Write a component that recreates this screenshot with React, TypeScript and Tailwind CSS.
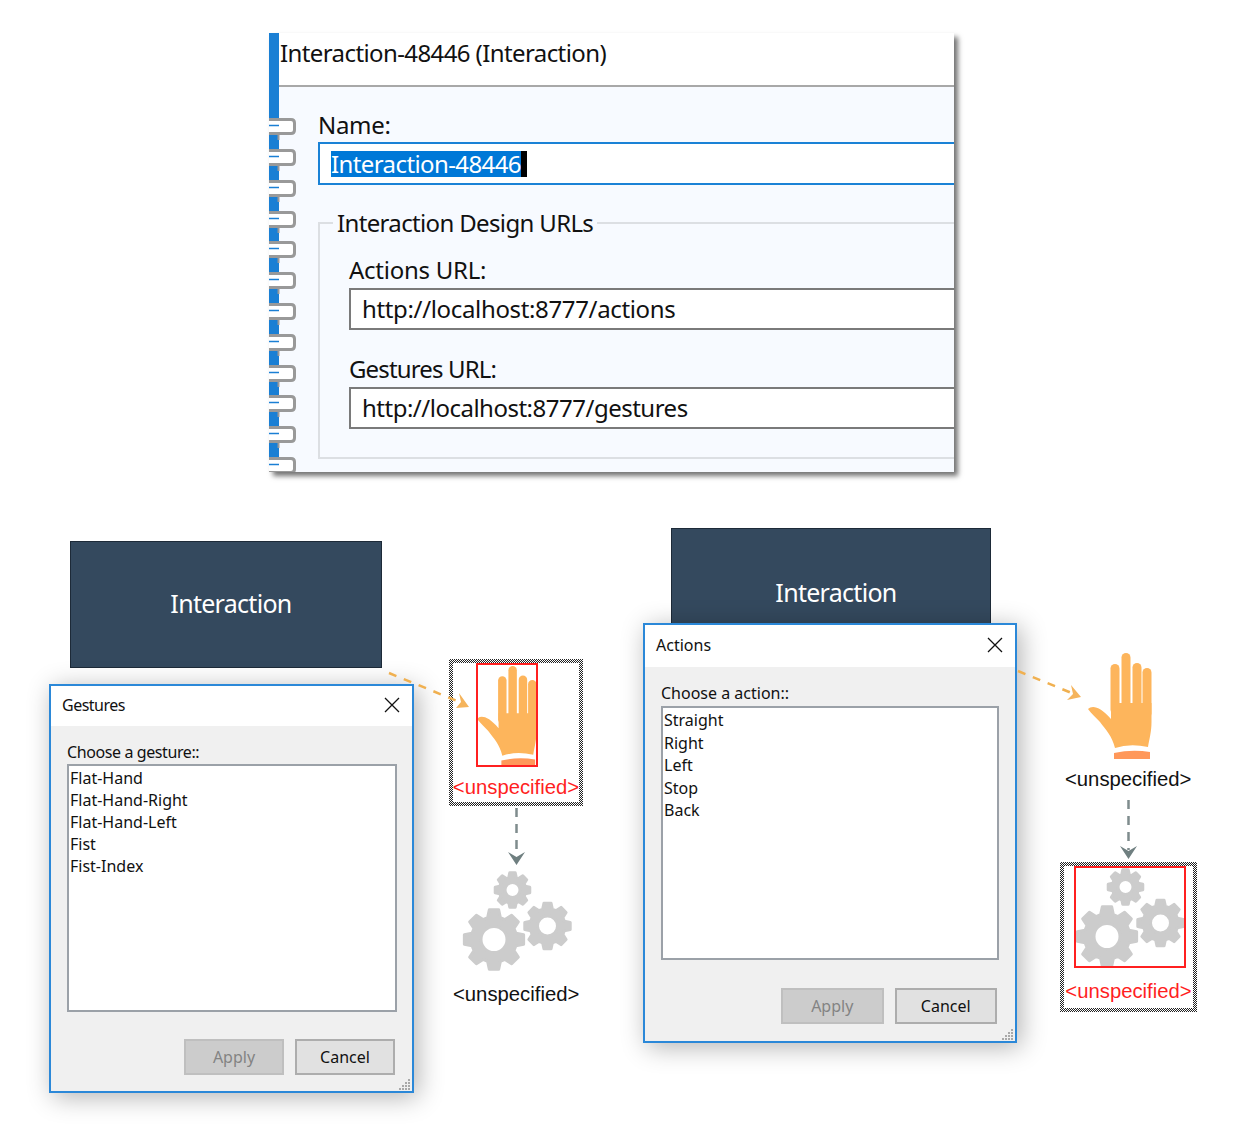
import React from 'react';

const RING_TOPS = [117, 148, 179, 210, 240, 271, 302, 333, 364, 394, 425, 456];

// Binder rings down the left edge of the notebook
const BinderRing = () => (
  <svg width="28" height="24" viewBox="0 0 28 24" className="block">
    <path d="M0 2.500H22Q25.500 2.500 25.500 6V13Q25.500 16.500 22 16.500H0" fill="#fff" stroke="#999999" strokeWidth="3" />
    <path d="M0 8.500H10" stroke="#1a7fd4" strokeWidth="1.500" />
    <path d="M9.500 17V23" stroke="#999999" strokeWidth="2" />
  </svg>
);

const TextBox = ({ value, trackingClass }: { value: string; trackingClass: string }) => (
  <div className={`flex h-[42px] items-center border-2 border-r-0 border-[#7a7a7a] bg-white pl-[11px] text-[24px] text-[#111] ${trackingClass}`}>
    {value}
  </div>
);

const Notebook = () => (
  <div className="absolute left-[269px] top-[33px] flex h-[439px] w-[685px] overflow-hidden bg-white shadow-[4px_4px_5px_rgba(0,0,0,0.55)]">
    <div className="w-[10px] shrink-0 bg-[#1a7fd4]" />
    <div className="absolute left-0 top-0">
      {RING_TOPS.map((top) => (
        <div key={top} className="absolute left-0" style={{ top: top - 33 }}>
          <BinderRing />
        </div>
      ))}
    </div>
    <div className="flex min-w-0 flex-1 flex-col">
      <div className="flex h-[52px] shrink-0 items-start pl-px pt-[3px] text-[24px] leading-[34px] tracking-[-0.6px] text-[#111]">
        Interaction-48446 (Interaction)
      </div>
      <div className="flex-1 border-t-2 border-[#a8a8a8] bg-[#f7faff] pl-[39px] pt-[24px]">
        <div className="mb-[3px] h-[28px] text-[24px] leading-[28px] tracking-[-0.3px] text-[#111]">Name:</div>
        <div className="flex h-[43px] items-center border-2 border-r-0 border-[#1a82d6] bg-white pl-[11px] text-[24px] tracking-[-0.6px]">
          <span className="bg-[#0078d7] leading-[26px] text-white">Interaction-48446</span>
          <span className="h-[26px] w-[6px] bg-black" />
        </div>
        <fieldset className="mt-[23px] border-2 border-r-0 border-[#dcdfe3] pb-[28px] pl-[29px]">
          <legend className="ml-[-16px] px-[4px] pt-px text-[24px] leading-[28px] tracking-[-0.65px] text-[#111]">Interaction Design URLs</legend>
          <div className="mb-[4px] mt-[19px] h-[28px] text-[24px] leading-[28px] tracking-[-0.25px] text-[#111]">Actions URL:</div>
          <TextBox value="http://localhost:8777/actions" trackingClass="tracking-[-0.35px]" />
          <div className="mb-[4px] mt-[25px] h-[28px] text-[24px] leading-[28px] tracking-[-0.85px] text-[#111]">Gestures URL:</div>
          <TextBox value="http://localhost:8777/gestures" trackingClass="tracking-[-0.5px]" />
        </fieldset>
      </div>
    </div>
  </div>
);

const Grip = () => (
  <svg width="12" height="12" viewBox="0 0 12 12" className="absolute bottom-[1px] right-[1px]">
    {[[9, 1], [6, 4], [9, 4], [3, 7], [6, 7], [9, 7], [0, 10], [3, 10], [6, 10], [9, 10]].map(([x, y]) => (
      <rect key={`${x}-${y}`} x={x} y={y} width="2" height="2" fill="#a9a9a9" />
    ))}
  </svg>
);

type DialogProps = {
  title: string;
  prompt: string;
  items: string[];
  rowClass: string;
  frameClass: string;
  titleClass: string;
  promptClass: string;
  listClass: string;
  buttonClass: string;
};

const Dialog = ({ title, prompt, items, rowClass, frameClass, titleClass, promptClass, listClass, buttonClass }: DialogProps) => (
  <div className={`absolute flex flex-col border-2 border-[#2b88d8] bg-white shadow-[4px_4px_24px_rgba(0,0,0,0.3)] ${frameClass}`}>
    <div className={`flex shrink-0 items-center justify-between pb-[2px] pl-[11px] pr-[12px] text-[16px] text-[#111] ${titleClass}`}>
      <span>{title}</span>
      <svg width="16" height="16" viewBox="0 0 16 16">
        <path d="M1 1L15 15M15 1L1 15" stroke="#111" strokeWidth="1.300" fill="none" />
      </svg>
    </div>
    <div className="relative flex flex-1 flex-col bg-[#f0f0f0] px-[16px] pt-[15px] text-[16px] text-[#111]">
      <div className={`h-[22px] leading-[22px] ${promptClass}`}>{prompt}</div>
      <div className={`border-2 border-[#9ba1a8] bg-white pl-[1px] pt-[1px] ${listClass}`}>
        {items.map((item) => (
          <div key={item} className={rowClass}>{item}</div>
        ))}
      </div>
      <div className={`flex justify-end gap-[11px] ${buttonClass}`}>
        <div className="flex h-[36px] flex-1 items-center justify-center border-2 border-[#bfbfbf] bg-[#cccccc] text-[#838383]">Apply</div>
        <div className="flex h-[36px] flex-1 items-center justify-center border-2 border-[#adadad] bg-[#e1e1e1]">Cancel</div>
      </div>
      <Grip />
    </div>
  </div>
);

const Hand = ({ width, height }: { width: number; height: number }) => (
  <svg width={width} height={height} viewBox="0 0 64 108" preserveAspectRatio="none" className="block">
    <g fill="#fdb55c">
      <rect x="22.500" y="12" width="9" height="50" rx="4.500" />
      <rect x="33.500" y="1" width="9" height="60" rx="4.500" />
      <rect x="44.500" y="11" width="9" height="50" rx="4.500" />
      <rect x="54.500" y="16" width="9" height="50" rx="4.500" />
      <path d="M0 57C4 53 12 54 23 67V51H63.500V70C63.500 80 61 88 60 95Q42 91 27 96C24 84 18 78 12 70C8 66 3 61 0 57Z" />
    </g>
    <path d="M26 101Q44 97 62 100V107H26Z" fill="#ff985a" />
  </svg>
);

function gearPath(cx: number, cy: number, r: number, hole: number, teeth = 8) {
  const root = r * 0.76;
  const step = (Math.PI * 2) / teeth;
  let d = '';
  for (let i = 0; i < teeth; i++) {
    const a = i * step - Math.PI / 2;
    const pts: [number, number][] = [
      [root, a - step * 0.36],
      [r, a - step * 0.2],
      [r, a + step * 0.2],
      [root, a + step * 0.36],
    ];
    pts.forEach(([rad, ang], j) => {
      d += `${i === 0 && j === 0 ? 'M' : 'L'}${(cx + rad * Math.cos(ang)).toFixed(2)} ${(cy + rad * Math.sin(ang)).toFixed(2)}`;
    });
  }
  d += `Z M${cx - hole} ${cy}a${hole} ${hole} 0 1 0 ${hole * 2} 0a${hole} ${hole} 0 1 0 ${-hole * 2} 0Z`;
  return d;
}

const Gears = () => (
  <svg width="112" height="104" viewBox="0 0 112 104" className="block">
    <g fill="#cccccc" stroke="#cccccc" strokeWidth="3" strokeLinejoin="round" fillRule="evenodd">
      <path d={gearPath(50.500, 20, 17.500, 7.500)} />
      <path d={gearPath(85.500, 56, 23, 10)} />
      <path d={gearPath(32, 69.500, 30, 13)} />
    </g>
  </svg>
);

// Dithered selection outline around a shape
const Selection = ({ className, children }: { className: string; children: React.ReactNode }) => (
  <div className={`absolute bg-[repeating-conic-gradient(#222_0_25%,#fff_0_50%)] bg-[length:2px_2px] p-[4px] ${className}`}>
    <div className="relative flex h-full w-full flex-col items-center bg-white">{children}</div>
  </div>
);

const Unspecified = ({ className, red }: { className: string; red?: boolean }) => (
  <div className={`font-['Liberation_Sans',sans-serif] text-[20.300px] leading-[24px] ${red ? 'text-[#ff1f1f]' : 'text-[#111]'} ${className}`}>
    &lt;unspecified&gt;
  </div>
);

const Block = ({ frameClass, textClass }: { frameClass: string; textClass: string }) => (
  <div className={`absolute flex justify-center border border-[#1d2a38] bg-[#34495e] text-[25px] tracking-[-0.7px] text-white ${frameClass}`}>
    <span className={textClass}>Interaction</span>
  </div>
);

const Connectors = () => (
  <svg width="1239" height="1136" viewBox="0 0 1239 1136" className="pointer-events-none absolute left-0 top-0">
    <g fill="none" stroke="#f0b050" strokeWidth="2.500">
      <path d="M389 673L462 703" strokeDasharray="8 8" />
      <path d="M1018 671L1074 694" strokeDasharray="8 8" />
    </g>
    <path d="M469 707L456 708L461 702L459 693Z" fill="#f5b45c" />
    <path d="M1081 697L1067 700L1073 694L1071 685Z" fill="#f5b45c" />
    <g stroke="#7f8c8d" strokeWidth="2.500" fill="none">
      <path d="M516.500 808V856" strokeDasharray="9 7" />
      <path d="M1128.500 800V850" strokeDasharray="9 7" />
    </g>
    <path d="M508 852L516.500 857L525 852L516.500 865Z" fill="#6f7f80" />
    <path d="M1120 846L1128.500 851L1137 846L1128.500 859Z" fill="#6f7f80" />
  </svg>
);

export default function App() {
  return (
    <div className="relative h-[1136px] w-[1239px] overflow-hidden bg-white font-['Noto_Sans',sans-serif]">
      <Notebook />

      <Block frameClass="left-[70px] top-[541px] h-[127px] w-[312px] pl-[10px] pt-[44px]" textClass="leading-[34px]" />
      <Block frameClass="left-[671px] top-[528px] h-[110px] w-[320px] pl-[10px] pt-[46px]" textClass="leading-[34px]" />

      <Dialog
        title="Gestures"
        prompt="Choose a gesture::"
        items={['Flat-Hand', 'Flat-Hand-Right', 'Flat-Hand-Left', 'Fist', 'Fist-Index']}
        rowClass="h-[22px] leading-[22px]"
        frameClass="left-[49px] top-[684px] h-[409px] w-[365px]"
        titleClass="h-[40px] tracking-[-0.5px]"
        promptClass="mb-px tracking-[-0.4px]"
        listClass="h-[248px] w-[330px]"
        buttonClass="mt-[27px] w-[211px] self-end mr-[1px]"
      />
      <Dialog
        title="Actions"
        prompt="Choose a action::"
        items={['Straight', 'Right', 'Left', 'Stop', 'Back']}
        rowClass="h-[22.500px] leading-[22.500px]"
        frameClass="left-[643px] top-[623px] h-[420px] w-[374px]"
        titleClass="h-[42px]"
        promptClass="mb-[2px]"
        listClass="h-[254px] w-[338px]"
        buttonClass="mt-[28px] w-[216px] self-end mr-[2px]"
      />

      <Selection className="left-[449px] top-[659px] h-[147px] w-[134px]">
        <div className="ml-[-18px] h-[104px] w-[62px] overflow-hidden border-2 border-[#ff2020]">
          <div className="ml-[-1px]">
            <Hand width={60} height={102} />
          </div>
        </div>
        <Unspecified red className="mt-[8px]" />
      </Selection>

      <div className="absolute left-[462px] top-[870px]">
        <Gears />
      </div>
      <Unspecified className="absolute left-[453px] top-[982px]" />

      <div className="absolute left-[1088px] top-[652px]">
        <Hand width={64} height={108} />
      </div>
      <Unspecified className="absolute left-[1065px] top-[767px]" />

      <Selection className="left-[1060px] top-[862px] h-[150px] w-[137px]">
        <div className="ml-[2px] h-[102px] w-[112px] overflow-hidden border-2 border-[#ff2020]">
          <div className="ml-[-1px] mt-[-1px]">
            <Gears />
          </div>
        </div>
        <Unspecified red className="mt-[11px]" />
      </Selection>

      <Connectors />
    </div>
  );
}
